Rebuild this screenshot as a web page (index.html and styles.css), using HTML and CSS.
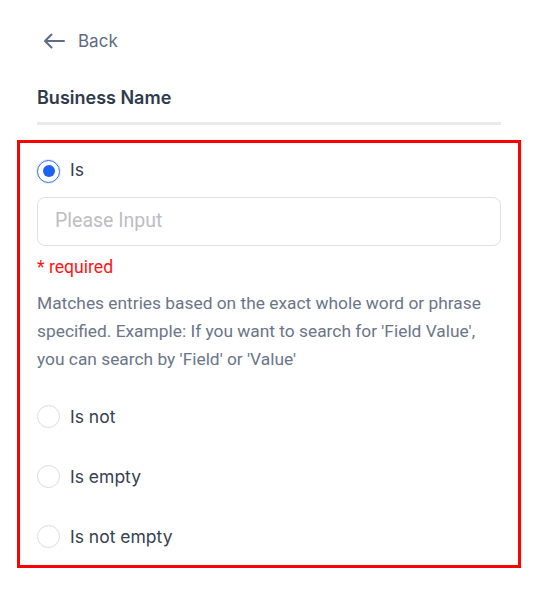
FILE: index.html
```html
<!DOCTYPE html>
<html>
<head>
<meta charset="utf-8">
<link rel="stylesheet" href="styles.css">
</head>
<body>
<div class="page">
  <div class="back">
    <svg class="back-icon" width="22" height="16" viewBox="0 0 22 16" fill="none" stroke="#5e6b80" stroke-width="2" stroke-linecap="round" stroke-linejoin="round"><path d="M21 8H2M8.5 1.5L2 8l6.5 6.5"/></svg>
    <span>Back</span>
  </div>
  <div class="title">Business Name</div>
  <div class="divider"></div>
  <div class="panel">
    <label class="option first">
      <span class="radio checked"><span class="dot"></span></span>
      <span class="label">Is</span>
    </label>
    <div class="input"><span class="placeholder">Please Input</span></div>
    <div class="required">* required</div>
    <p class="desc">Matches entries based on the exact whole word or phrase specified. Example: If you want to search for 'Field Value', you can search by 'Field' or 'Value'</p>
    <div class="others">
      <label class="option"><span class="radio"></span><span class="label">Is not</span></label>
      <label class="option"><span class="radio"></span><span class="label">Is empty</span></label>
      <label class="option"><span class="radio"></span><span class="label">Is not empty</span></label>
    </div>
  </div>
</div>
</body>
</html>
```
FILE: styles.css
```css
* { box-sizing: border-box; }
html, body { margin: 0; padding: 0; background: #fff; }
body { font-family: Inter, "Noto Sans", sans-serif; }
.page { padding: 21px 20px 0 17px; width: 541px; }
.back { display: flex; align-items: center; height: 40px; padding-left: 26px; gap: 13px; color: #5e6b80; font-size: 17px; }
.back-icon { display: block; }
.title { margin-top: 23px; margin-left: 20px; font-size: 18px; font-weight: 600; color: #2f3a4c; line-height: 28px; height: 28px; }
.divider { margin: 10px 0 0 20px; width: 464px; height: 3px; background: #e9e9ee; }
.panel { margin-top: 15px; width: 504px; border: 3px solid #ff0000; padding: 6px 17px 9px 17px; }
.option { display: flex; align-items: center; height: 40px; gap: 10px; }
.radio { width: 23px; height: 23px; border-radius: 50%; border: 1px solid #d9dce3; display: flex; align-items: center; justify-content: center; flex: none; }
.radio.checked { border: 1.5px solid #2f6bf0; box-shadow: 0 0 0 1px rgba(47,107,240,0.12); }
.first .radio { margin-top: 4px; }
.dot { width: 12px; height: 12px; border-radius: 50%; background: #1c63f2; }
.label { font-size: 17.5px; color: #364152; }
.input { margin-top: 8px; height: 49px; border: 1px solid #e0e0e6; border-radius: 8px; padding-left: 17px; display: flex; align-items: center; padding-bottom: 3px; }
.placeholder { font-family: Roboto, sans-serif; font-size: 19.5px; color: #bdbdc2; }
.required { margin-top: 9px; line-height: 24px; font-family: Roboto, sans-serif; font-size: 17.6px; color: #ff1414; }
.desc { margin: 10px 0 0 0; font-family: Roboto, sans-serif; font-size: 17.35px; line-height: 28px; color: #6b7588; }
.others { margin-top: 23px; display: flex; flex-direction: column; gap: 20px; }
```
